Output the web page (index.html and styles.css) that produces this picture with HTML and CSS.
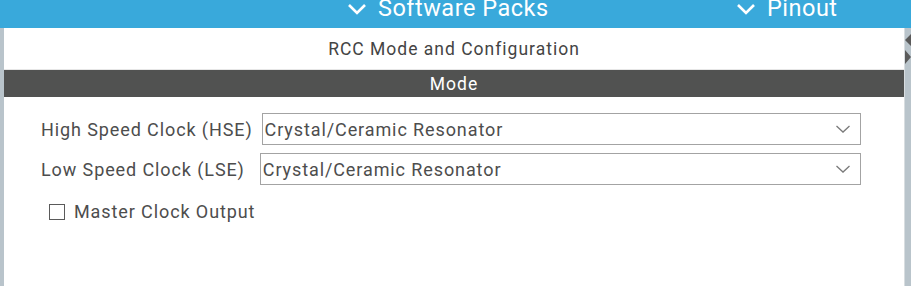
FILE: index.html
```html
<!DOCTYPE html>
<html lang="en">
<head>
    <meta charset="UTF-8">
    <title>RCC Mode and Configuration</title>
    <link rel="stylesheet" href="styles.css">
</head>
<body>
    <div class="topbar">
        <div class="tab tab-packs">
            <svg class="tab-chevron" width="20" height="12" viewBox="0 0 20 12"><path d="M2 2 L10 10 L18 2" fill="none" stroke="#fff" stroke-width="2.6"/></svg>
            <span>Software Packs</span>
        </div>
        <div class="tab tab-pinout">
            <svg class="tab-chevron" width="20" height="12" viewBox="0 0 20 12"><path d="M2 2 L10 10 L18 2" fill="none" stroke="#fff" stroke-width="2.6"/></svg>
            <span>Pinout</span>
        </div>
    </div>

    <div class="workspace">
        <div class="panel">
            <div class="panel-title">RCC Mode and Configuration</div>
            <div class="section-bar">Mode</div>

            <div class="mode-form">
                <div class="form-row">
                    <label class="field-label">High Speed Clock (HSE)</label>
                    <div class="select select-hse">
                        <span>Crystal/Ceramic Resonator</span>
                        <svg width="16" height="10" viewBox="0 0 16 10"><path d="M1.5 2 L8 8 L14.5 2" fill="none" stroke="#7a7a7a" stroke-width="1.3"/></svg>
                    </div>
                </div>
                <div class="form-row">
                    <label class="field-label">Low Speed Clock (LSE)</label>
                    <div class="select select-lse">
                        <span>Crystal/Ceramic Resonator</span>
                        <svg width="16" height="10" viewBox="0 0 16 10"><path d="M1.5 2 L8 8 L14.5 2" fill="none" stroke="#7a7a7a" stroke-width="1.3"/></svg>
                    </div>
                </div>
                <div class="check-row">
                    <span class="checkbox"></span>
                    <span>Master Clock Output</span>
                </div>
            </div>
        </div>

        <div class="side-handle">
            <svg width="6" height="40" viewBox="0 0 6 40"><path d="M6 4 L0 10 L6 16 Z M0 20 L6 27 L0 34 Z" fill="#5a5a5a"/></svg>
        </div>
    </div>
</body>
</html>
```

FILE: styles.css
```css
body {
    margin: 0;
    font-family: Roboto, "Liberation Sans", sans-serif;
    background-color: #b9c4cb;
    overflow: hidden;
}

.topbar {
    height: 28px;
    background-color: #39a9db;
    position: relative;
    overflow: hidden;
}

.tab {
    position: absolute;
    top: -7px;
    display: flex;
    align-items: center;
    gap: 11px;
    color: #fff;
    font-size: 23.5px;
    letter-spacing: 0.5px;
    line-height: 30px;
}

.tab-packs {
    left: 347px;
}

.tab-pinout {
    left: 736px;
}

.tab-chevron {
    margin-top: 2px;
}

.workspace {
    display: flex;
    height: 258px;
}

.panel {
    flex: 1;
    margin-left: 4px;
    background-color: #fff;
}

.panel-title {
    height: 41px;
    line-height: 42px;
    text-align: center;
    font-size: 17.5px;
    letter-spacing: 1px;
    color: #444;
    border-bottom: 1px solid #e6e6e6;
}

.section-bar {
    height: 27px;
    line-height: 28px;
    background-color: #515251;
    color: #fff;
    text-align: center;
    font-size: 17.5px;
    letter-spacing: 1px;
}

.mode-form {
    padding: 16px 43px 0 37px;
    color: #4d4d4d;
    font-size: 18px;
    letter-spacing: 0.9px;
}

.form-row {
    display: flex;
    align-items: center;
    height: 32px;
    margin-bottom: 8px;
}

.select {
    flex: 1;
    display: flex;
    align-items: center;
    justify-content: space-between;
    box-sizing: border-box;
    height: 32px;
    border: 1px solid #a3a3a3;
    padding: 0 9px 0 2px;
}

.select-hse {
    margin-left: 9px;
}

.select-lse {
    margin-left: 15px;
}

.check-row {
    display: flex;
    align-items: center;
    gap: 9px;
    margin-left: 8px;
    margin-top: 16px;
}

.checkbox {
    width: 14px;
    height: 14px;
    border: 1.5px solid #5a5a5a;
    background-color: #fff;
}

.side-handle {
    width: 6px;
    border-left: 1px solid #d8dde0;
    padding-top: 2px;
}
```
